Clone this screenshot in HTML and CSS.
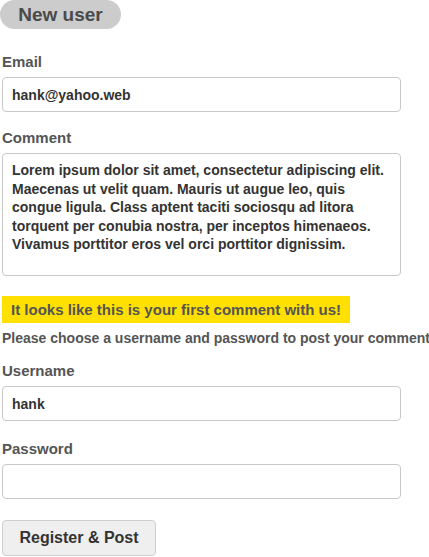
FILE: index.html
```html
<!DOCTYPE html>
<html>
<head>
<meta name="viewport" content="width=device-width, initial-scale=1">
<title>New user</title>
<link rel="stylesheet" href="styles.css">
</head>
<body>
<div class="pill">New user</div>

<form class="signup">
  <label class="field-label first" for="email">Email</label>
  <input class="field" type="text" id="email" value="hank@yahoo.web">

  <label class="field-label cm" for="comment">Comment</label>
  <textarea class="field area" id="comment">Lorem ipsum dolor sit amet, consectetur adipiscing elit. Maecenas ut velit quam. Mauris ut augue leo, quis congue ligula. Class aptent taciti sociosqu ad litora torquent per conubia nostra, per inceptos himenaeos. Vivamus porttitor eros vel orci porttitor dignissim.</textarea>

  <div class="notice">It looks like this is your first comment with us!</div>
  <p class="hint">Please choose a username and password to post your comment</p>

  <label class="field-label" for="username">Username</label>
  <input class="field" type="text" id="username" value="hank">

  <label class="field-label pw" for="password">Password</label>
  <input class="field" type="password" id="password">

  <button type="button" class="submit">Register &amp; Post</button>
</form>
</body>
</html>
```
FILE: styles.css
```css
* {
  box-sizing: border-box;
}

body {
  margin: 0;
  font-family: "Liberation Sans", Arial, sans-serif;
  color: #555;
  background: white;
}

.pill {
  display: inline-block;
  width: 121px;
  height: 29px;
  line-height: 29px;
  text-align: center;
  background: #cccccc;
  border-radius: 15px;
  color: #4a4a4a;
  font-size: 19px;
  font-weight: bold;
}

.signup {
  display: flex;
  flex-direction: column;
  align-items: flex-start;
  padding: 0 0 0 2px;
}

.field-label {
  font-size: 15px;
  line-height: 17px;
  font-weight: bold;
  color: #555;
  margin-top: 16px;
  margin-bottom: 7px;
}

.field-label.first {
  margin-top: 24px;
}

.field-label.cm {
  margin-top: 17px;
}

.field-label.pw {
  margin-top: 19px;
}

.field {
  width: 399px;
  height: 35px;
  border: 1px solid #c8c8c8;
  border-radius: 4px;
  padding: 0 9px;
  font-family: "Liberation Sans", Arial, sans-serif;
  font-size: 14px;
  font-weight: bold;
  color: #333;
  background: white;
}

.area {
  height: 123px;
  padding: 7px 9px 6px;
  line-height: 18.5px;
  resize: none;
}

.notice {
  margin-top: 20px;
  background: #ffe000;
  padding: 5px 9px;
  font-size: 15px;
  line-height: 17px;
  font-weight: bold;
  color: #555;
}

.hint {
  margin: 7px 0 0;
  font-size: 14px;
  line-height: 16px;
  font-weight: bold;
  color: #555;
  white-space: nowrap;
}

.submit {
  margin-top: 21px;
  width: 154px;
  height: 36px;
  border: 1px solid #cfcfcf;
  border-radius: 4px;
  background: #efefef;
  font-family: "Liberation Sans", Arial, sans-serif;
  font-size: 16px;
  font-weight: bold;
  color: #333;
}
```
